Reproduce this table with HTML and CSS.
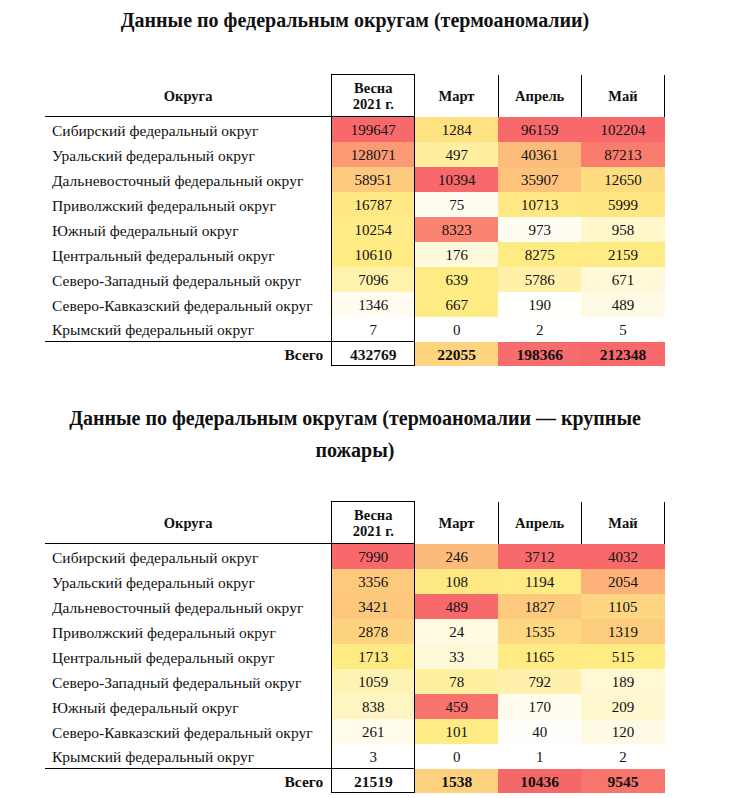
FILE: index.html
```html
<!DOCTYPE html>
<html lang="ru">
<head>
<meta charset="utf-8">
<title>Данные по федеральным округам</title>
<link rel="stylesheet" href="styles.css">
</head>
<body>
<main class="page">
  <h2 class="title">Данные по федеральным округам (термоаномалии)</h2>
  <table class="data">
    <colgroup><col class="c-label"><col class="c-num"><col class="c-num"><col class="c-num"><col class="c-num"></colgroup>
    <thead>
      <tr>
        <th class="h-label">Округа</th>
        <th class="h-spring">Весна<br>2021 г.</th>
        <th class="h-month">Март</th>
        <th class="h-month">Апрель</th>
        <th class="h-month">Май</th>
      </tr>
    </thead>
    <tbody>
      <tr><td class="label">Сибирский федеральный округ</td><td class="spring" style="background:rgb(248,105,107)">199647</td><td style="background:rgb(254,226,130)">1284</td><td style="background:rgb(248,105,107)">96159</td><td style="background:rgb(248,105,107)">102204</td></tr>
      <tr><td class="label">Уральский федеральный округ</td><td class="spring" style="background:rgb(251,154,117)">128071</td><td style="background:rgb(255,239,159)">497</td><td style="background:rgb(252,188,123)">40361</td><td style="background:rgb(249,124,111)">87213</td></tr>
      <tr><td class="label">Дальневосточный федеральный округ</td><td class="spring" style="background:rgb(253,202,126)">58951</td><td style="background:rgb(248,105,107)">10394</td><td style="background:rgb(253,194,124)">35907</td><td style="background:rgb(254,221,129)">12650</td></tr>
      <tr><td class="label">Приволжский федеральный округ</td><td class="spring" style="background:rgb(255,231,131)">16787</td><td style="background:rgb(255,253,241)">75</td><td style="background:rgb(255,231,131)">10713</td><td style="background:rgb(255,230,131)">5999</td></tr>
      <tr><td class="label">Южный федеральный округ</td><td class="spring" style="background:rgb(255,236,136)">10254</td><td style="background:rgb(249,133,112)">8323</td><td style="background:rgb(255,253,241)">973</td><td style="background:rgb(255,246,201)">958</td></tr>
      <tr><td class="label">Центральный федеральный округ</td><td class="spring" style="background:rgb(255,235,132)">10610</td><td style="background:rgb(255,249,221)">176</td><td style="background:rgb(255,235,132)">8275</td><td style="background:rgb(255,235,132)">2159</td></tr>
      <tr><td class="label">Северо-Западный федеральный округ</td><td class="spring" style="background:rgb(255,242,173)">7096</td><td style="background:rgb(255,235,132)">639</td><td style="background:rgb(255,241,169)">5786</td><td style="background:rgb(255,249,217)">671</td></tr>
      <tr><td class="label">Северо-Кавказский федеральный округ</td><td class="spring" style="background:rgb(255,252,239)">1346</td><td style="background:rgb(255,235,132)">667</td><td style="background:rgb(255,255,252)">190</td><td style="background:rgb(255,250,227)">489</td></tr>
      <tr><td class="label">Крымский федеральный округ</td><td class="spring">7</td><td>0</td><td>2</td><td>5</td></tr>
      <tr class="total"><td class="t-label">Всего</td><td class="t-spring">432769</td><td style="background:rgb(254,212,128)">22055</td><td style="background:rgb(247,108,108)">198366</td><td style="background:rgb(246,104,106)">212348</td></tr>
    </tbody>
  </table>

  <h2 class="title title-second">Данные по федеральным округам (термоаномалии — крупные пожары)</h2>
  <table class="data">
    <colgroup><col class="c-label"><col class="c-num"><col class="c-num"><col class="c-num"><col class="c-num"></colgroup>
    <thead>
      <tr>
        <th class="h-label">Округа</th>
        <th class="h-spring">Весна<br>2021 г.</th>
        <th class="h-month">Март</th>
        <th class="h-month">Апрель</th>
        <th class="h-month">Май</th>
      </tr>
    </thead>
    <tbody>
      <tr><td class="label">Сибирский федеральный округ</td><td class="spring" style="background:rgb(248,105,107)">7990</td><td style="background:rgb(252,186,123)">246</td><td style="background:rgb(248,105,107)">3712</td><td style="background:rgb(248,105,107)">4032</td></tr>
      <tr><td class="label">Уральский федеральный округ</td><td class="spring" style="background:rgb(253,201,125)">3356</td><td style="background:rgb(255,233,132)">108</td><td style="background:rgb(255,234,132)">1194</td><td style="background:rgb(252,178,121)">2054</td></tr>
      <tr><td class="label">Дальневосточный федеральный округ</td><td class="spring" style="background:rgb(253,200,125)">3421</td><td style="background:rgb(248,105,107)">489</td><td style="background:rgb(253,201,125)">1827</td><td style="background:rgb(254,213,128)">1105</td></tr>
      <tr><td class="label">Приволжский федеральный округ</td><td class="spring" style="background:rgb(254,211,127)">2878</td><td style="background:rgb(255,250,226)">24</td><td style="background:rgb(254,216,128)">1535</td><td style="background:rgb(253,205,126)">1319</td></tr>
      <tr><td class="label">Центральный федеральный округ</td><td class="spring" style="background:rgb(255,235,132)">1713</td><td style="background:rgb(255,248,215)">33</td><td style="background:rgb(255,235,132)">1165</td><td style="background:rgb(255,235,132)">515</td></tr>
      <tr><td class="label">Северо-Западный федеральный округ</td><td class="spring" style="background:rgb(255,243,179)">1059</td><td style="background:rgb(255,240,160)">78</td><td style="background:rgb(255,241,171)">792</td><td style="background:rgb(255,248,210)">189</td></tr>
      <tr><td class="label">Южный федеральный округ</td><td class="spring" style="background:rgb(255,245,195)">838</td><td style="background:rgb(249,115,109)">459</td><td style="background:rgb(255,252,237)">170</td><td style="background:rgb(255,247,205)">209</td></tr>
      <tr><td class="label">Северо-Кавказский федеральный округ</td><td class="spring" style="background:rgb(255,252,236)">261</td><td style="background:rgb(255,235,132)">101</td><td style="background:rgb(255,254,251)">40</td><td style="background:rgb(255,250,227)">120</td></tr>
      <tr><td class="label">Крымский федеральный округ</td><td class="spring">3</td><td>0</td><td>1</td><td>2</td></tr>
      <tr class="total"><td class="t-label">Всего</td><td class="t-spring">21519</td><td style="background:rgb(253,210,127)">1538</td><td style="background:rgb(244,104,106)">10436</td><td style="background:rgb(248,117,110)">9545</td></tr>
    </tbody>
  </table>
</main>
</body>
</html>
```

FILE: styles.css
```css
* { box-sizing: border-box; }

body {
  margin: 0;
  background: #ffffff;
  color: #111111;
  font-family: "Liberation Serif", "Times New Roman", serif;
}

.page {
  width: 665px;
  padding: 4px 0 0 45px;
}

.title {
  margin: 0;
  font-size: 20px;
  line-height: 32px;
  font-weight: bold;
  text-align: center;
  color: #111111;
}

.title-second {
  margin-top: 36px;
  padding: 0 20px;
}

.data {
  border-collapse: collapse;
  table-layout: fixed;
  width: 620px;
  margin-top: 38px;
}

.title-second + .data {
  margin-top: 35px;
}

.c-label { width: 286px; }
.c-num { width: 83px; }

.data th {
  height: 42px;
  padding: 1px 0 0;
  font-size: 14.5px;
  line-height: 16px;
  font-weight: bold;
  text-align: center;
  vertical-align: middle;
}

.data th.h-label {
  border-bottom: 1px solid #000;
}

.data th.h-spring {
  border: 1px solid #000;
}

.data th.h-month {
  border-right: 1px solid #000;
}

.data td {
  height: 25px;
  padding: 3px 0 0;
  font-size: 15px;
  text-align: center;
  vertical-align: middle;
  white-space: nowrap;
}

.data td.label {
  text-align: left;
  padding-left: 7px;
  font-size: 15.5px;
}

.data td.spring {
  border-left: 1px solid #000;
  border-right: 1px solid #000;
}

.total td {
  height: 24px;
  font-weight: bold;
  font-size: 15.5px;
}

.data td.t-label {
  text-align: right;
  padding-right: 8px;
  border-top: 1px solid #000;
}

.data td.t-spring {
  border: 1px solid #000;
}
```
